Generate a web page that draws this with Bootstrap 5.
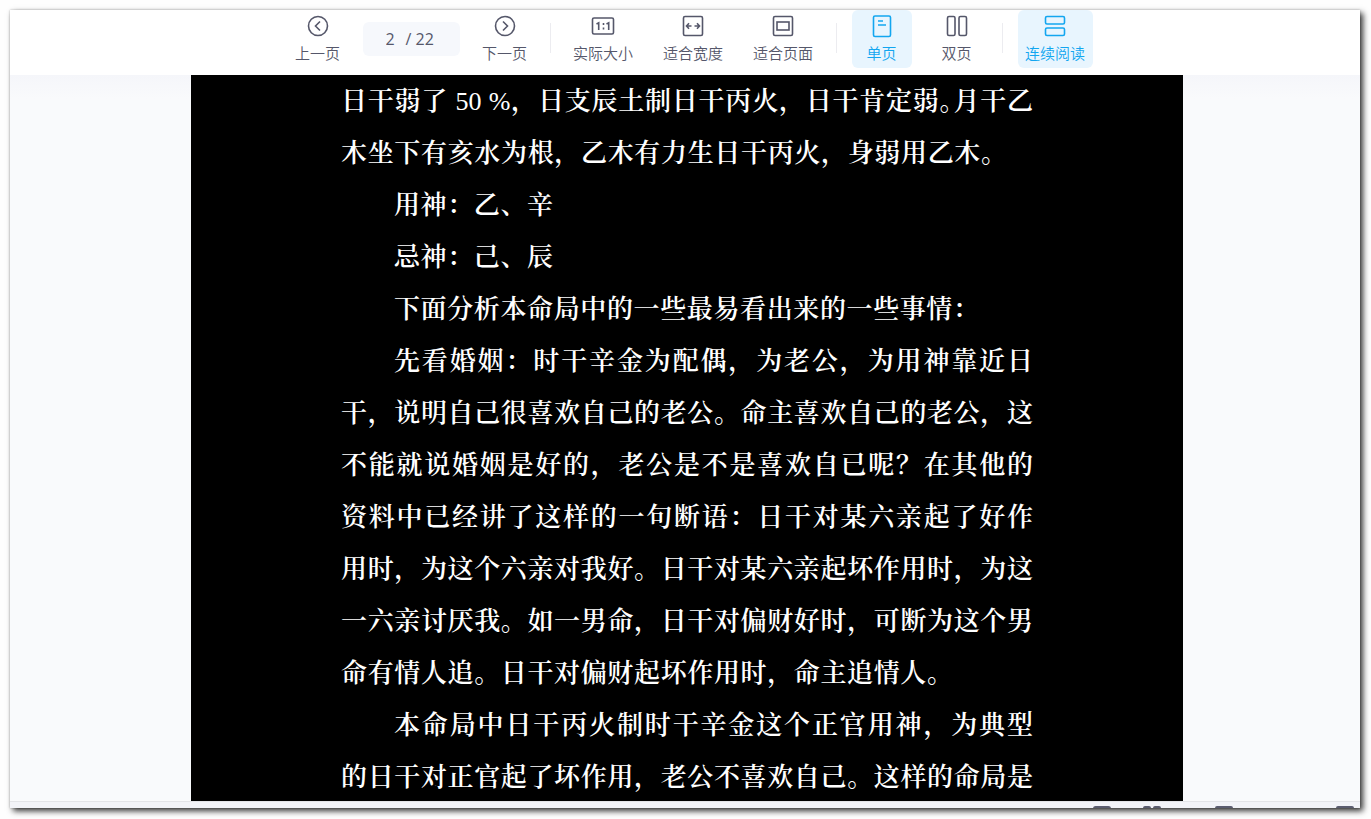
<!DOCTYPE html>
<html lang="zh-CN">
<head>
<meta charset="utf-8">
<meta name="viewport" content="width=device-width, initial-scale=1">
<title>文档阅读</title>
<link href="https://cdn.jsdelivr.net/npm/bootstrap@5.3.0/dist/css/bootstrap.min.css" rel="stylesheet">
<style>
  body { background: #fefefe; font-family: "Open Sans", "Noto Sans CJK SC", sans-serif; padding: 10px 11px 11px 10px; }
  .viewer { background: #f8fafc; box-shadow: 3px 3px 6px rgba(0,0,0,.8), 0 0 2px rgba(0,0,0,.25); }
  .toolbar { background: #fff; height: 65px; gap: 15px; padding-left: 10px; }
  .tool { width: 60px; height: 58px; padding: 4px 0; gap: 4px; border: 0; border-radius: 6px; background: transparent; color: #55576a; font-size: 15px; font-weight: 350; line-height: 22px; font-family: "Noto Sans CJK SC", sans-serif; white-space: nowrap; }
  .tool-wide { width: 75px; }
  .tool.active { background: #e8f5fe; color: #12a6f0; }
  .tool svg { width: 24px; height: 24px; fill: none; stroke: currentColor; stroke-width: 1.6; flex: none; }
  .rule { width: 1px; height: 30px; background: #ececf0; margin-top: 13px; }
  .pager { width: 97px; height: 34px; margin-top: 12px; padding-left: 21px; background: #f6f8fc; border-radius: 6px; color: #55576a; font-size: 16px; }
  .pager input { width: 22px; padding: 0 0 0 2px; border: 0; background: transparent; color: inherit; }
  .stage { min-height: 0; padding-left: 4px; background: linear-gradient(#f5f6fa, #f9fafc 24px); }
  .sheet { width: 100%; max-width: 992px; padding: 1px 150px 0; background: #000; color: #fff; font-family: "Liberation Serif", "Noto Serif CJK SC", "Noto Sans CJK SC", serif; font-size: 26px; font-weight: 600; line-height: 52px; }
  .sheet p { margin: 0; padding-left: 53px; }
  .sheet .cont { padding-left: 0; }
  .latin { font-weight: 400; }
  .half-stop { font-feature-settings: "halt"; }
  .row-text { display: block; height: 52px; white-space: nowrap; text-align: justify; text-align-last: justify; }
  .hang { margin-left: -53px; }
  .span-6 { width: 159px; }
  .span-22 { width: 585px; }
  .span-23 { width: 612px; }
  .span-25 { width: 666px; }
  .dock { height: 7px; border-top: 1px solid #e3e4e8; background: #f2f3f8; padding-right: 6px; }
  .dock svg { width: 18px; height: 18px; flex: none; margin-top: 4px; fill: none; stroke: #5b5d70; stroke-width: 2; }
  .dock .gap-s { margin-left: 32px; }
  .dock .gap-m { margin-left: 54px; }
  .dock .gap-l { margin-left: 103px; }
</style>
</head>
<body class="vh-100 overflow-hidden">
<main class="viewer d-flex flex-column h-100">
  <nav class="toolbar d-flex justify-content-center flex-shrink-0" aria-label="阅读工具">
    <button type="button" class="tool d-flex flex-column align-items-center"><svg viewBox="0 0 24 24"><circle cx="12" cy="12" r="9.5"/><path d="M14 7.5 9.5 12l4.5 4.5"/></svg><span>上一页</span></button>
    <div class="pager d-flex align-items-center"><input type="text" value="2" aria-label="页码"><span>/ 22</span></div>
    <button type="button" class="tool d-flex flex-column align-items-center"><svg viewBox="0 0 24 24"><circle cx="12" cy="12" r="9.5"/><path d="m10 7.5 4.5 4.5-4.5 4.5"/></svg><span>下一页</span></button>
    <div class="rule"></div>
    <button type="button" class="tool tool-wide d-flex flex-column align-items-center"><svg viewBox="0 0 24 24"><rect x="1.5" y="4" width="21" height="16" rx="1.5"/><path d="m5.5 10 2.2-1.2V16M15.500 10l2.2-1.2V16M12.500 9v2M12.500 13.500v2"/></svg><span>实际大小</span></button>
    <button type="button" class="tool tool-wide d-flex flex-column align-items-center"><svg viewBox="0 0 24 24"><rect x="2.5" y="2.5" width="19" height="19" rx="1.5"/><path d="M5.500 12h5M8 9.300 5.500 12 8 14.700M18.500 12h-5M16 9.300l2.500 2.700-2.500 2.700"/></svg><span>适合宽度</span></button>
    <button type="button" class="tool tool-wide d-flex flex-column align-items-center"><svg viewBox="0 0 24 24"><rect x="2.5" y="2.5" width="19" height="19" rx="1.5"/><rect x="6" y="8" width="12" height="8"/></svg><span>适合页面</span></button>
    <div class="rule"></div>
    <button type="button" class="tool active d-flex flex-column align-items-center" aria-pressed="true"><svg viewBox="0 0 24 24"><rect x="3.5" y="2" width="17" height="20.5" rx="1.5"/><path d="M8 7h5M8 11h8"/></svg><span>单页</span></button>
    <button type="button" class="tool d-flex flex-column align-items-center"><svg viewBox="0 0 24 24"><rect x="2.5" y="2.5" width="7.5" height="19" rx="1.5"/><rect x="14" y="2.5" width="7.5" height="19" rx="1.5"/></svg><span>双页</span></button>
    <div class="rule"></div>
    <button type="button" class="tool tool-wide active d-flex flex-column align-items-center" aria-pressed="true"><svg viewBox="0 0 24 24"><rect x="2.5" y="2.5" width="19" height="7.5" rx="1.5"/><rect x="2.5" y="14" width="19" height="7.5" rx="1.5"/></svg><span>连续阅读</span></button>
  </nav>

  <section class="stage flex-grow-1 overflow-hidden d-flex justify-content-center">
    <article class="sheet">
      <p class="cont"><span class="row-text">日干弱了<span class="latin"> 50 %</span>，日支辰土制日干丙火，日干肯定弱<span class="half-stop">。</span>月干乙</span><span class="row-text span-25">木坐下有亥水为根，乙木有力生日干丙火，身弱用乙木。</span></p>
      <p><span class="row-text span-6">用神：乙、辛</span></p>
      <p><span class="row-text span-6">忌神：己、辰</span></p>
      <p><span class="row-text span-22">下面分析本命局中的一些最易看出来的一些事情：</span></p>
      <p><span class="row-text">先看婚姻：时干辛金为配偶，为老公，为用神靠近日</span><span class="row-text hang">干，说明自己很喜欢自己的老公。命主喜欢自己的老公，这</span><span class="row-text hang">不能就说婚姻是好的，老公是不是喜欢自已呢？在其他的</span><span class="row-text hang">资料中已经讲了这样的一句断语：日干对某六亲起了好作</span><span class="row-text hang">用时，为这个六亲对我好。日干对某六亲起坏作用时，为这</span><span class="row-text hang">一六亲讨厌我。如一男命，日干对偏财好时，可断为这个男</span><span class="row-text span-23 hang">命有情人追。日干对偏财起坏作用时，命主追情人。</span></p>
      <p><span class="row-text">本命局中日干丙火制时干辛金这个正官用神，为典型</span><span class="row-text hang">的日干对正官起了坏作用，老公不喜欢自己。这样的命局是</span></p>
    </article>
  </section>

  <footer class="dock d-flex justify-content-end flex-shrink-0 overflow-hidden">
    <svg viewBox="0 0 18 18"><rect x="1" y="1" width="16" height="16" rx="1.5"/></svg>
    <svg class="gap-s" viewBox="0 0 18 18"><rect x="1" y="1" width="6" height="16" rx="1"/><rect x="11" y="1" width="6" height="16" rx="1"/></svg>
    <svg class="gap-m" viewBox="0 0 18 18"><rect x="1" y="1" width="16" height="6" rx="1"/></svg>
    <svg class="gap-l" viewBox="0 0 18 18"><rect x="1" y="1" width="16" height="16" rx="1"/></svg>
  </footer>
</main>
<script src="https://cdn.jsdelivr.net/npm/bootstrap@5.3.0/dist/js/bootstrap.bundle.min.js"></script>
</body>
</html>
